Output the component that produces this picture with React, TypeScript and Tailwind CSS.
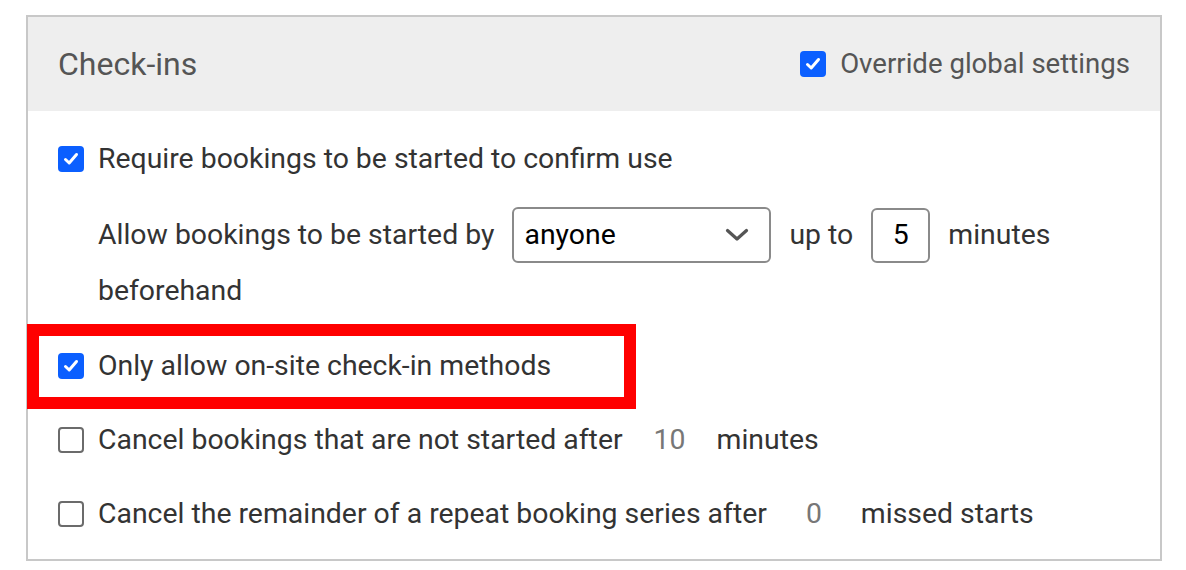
import React from 'react';

const Check = ({ checked }: { checked?: boolean }) =>
    checked ? (
        <span className="flex h-[26px] w-[26px] shrink-0 items-center justify-center rounded-[4px] bg-[#0b5fff]">
            <svg width="18" height="18" viewBox="0 0 18 18" fill="none">
                <path d="M3.5 9.5 L7.2 13 L14.5 4.5" stroke="white" strokeWidth="3" strokeLinecap="round" strokeLinejoin="round" />
            </svg>
        </span>
    ) : (
        <span className="h-[26px] w-[26px] shrink-0 rounded-[4px] border-2 border-[#6b6b6b] bg-white" />
    );

const Num = ({ value }: { value: string }) => (
    <span className="w-[58px] text-center text-[#777]">{value}</span>
);

export default function App() {
    return (
        <div className="min-h-[570px] bg-white pl-[26px] pt-[15px] font-['Roboto',sans-serif] text-[28.4px] text-[#333]">
            <div className="relative h-[546px] w-[1136px] border-2 border-[#c8c8c8]">
                <div className="flex h-[94px] items-center justify-between bg-[#eeeeee] px-[30px]">
                    <h2 className="text-[32px] text-[#555]">Check-ins</h2>
                    <label className="flex items-center gap-[14px] text-[27.6px] text-[#555]">
                        <Check checked />
                        Override global settings
                    </label>
                </div>

                <div className="flex flex-col pl-[30px] pt-[20px]">
                    <div className="flex h-[56px] items-center gap-[14px]">
                        <Check checked />
                        <span>Require bookings to be started to confirm use</span>
                    </div>

                    <div className="mt-[20px] flex flex-wrap items-center gap-x-[18px] pl-[40px] leading-[56px]">
                        <span>Allow bookings to be started by</span>
                        <div className="flex h-[56px] w-[259px] items-center justify-between rounded-[6px] border-2 border-[#8a8a8a] pl-[10px] pr-[20px] text-black">
                            <span>anyone</span>
                            <svg width="24" height="14" viewBox="0 0 24 14" fill="none">
                                <path d="M2.5 2.5 L12 11 L21.5 2.5" stroke="#555" strokeWidth="3.2" strokeLinecap="round" strokeLinejoin="round" />
                            </svg>
                        </div>
                        <span>up to</span>
                        <div className="flex h-[55px] w-[59px] items-center justify-center rounded-[6px] border-2 border-[#8a8a8a] text-black">
                            5
                        </div>
                        <span>minutes</span>
                        <span className="basis-full">beforehand</span>
                    </div>

                    <div className="mt-[10px] flex h-[74px] items-center gap-[14px]">
                        <Check checked />
                        <span>Only allow on-site check-in methods</span>
                    </div>

                    <div className="flex h-[74px] items-center">
                        <Check />
                        <span className="ml-[14px]">Cancel bookings that are not started after</span>
                        <span className="ml-[18px]" />
                        <Num value="10" />
                        <span className="ml-[18px]">minutes</span>
                    </div>

                    <div className="flex h-[74px] items-center">
                        <Check />
                        <span className="ml-[14px]">Cancel the remainder of a repeat booking series after</span>
                        <span className="ml-[18px]" />
                        <Num value="0" />
                        <span className="ml-[18px]">missed starts</span>
                    </div>
                </div>

                <div className="pointer-events-none absolute left-[-1px] top-[307px] h-[85px] w-[609px] border-[12px] border-[#ff0000]" />
            </div>
        </div>
    );
}
